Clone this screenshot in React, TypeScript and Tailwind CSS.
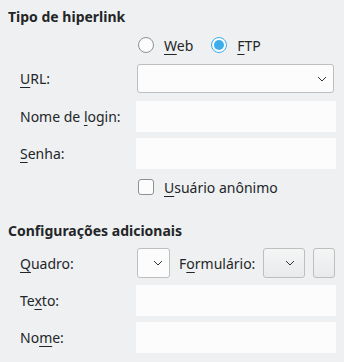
import React from "react";

const font = { fontFamily: '"Noto Sans", "Open Sans", sans-serif' };

function Chevron() {
  return (
    <svg width="10" height="6" viewBox="0 0 10 6" className="text-[#31363b]">
      <path d="M1 1 L5 5 L9 1" fill="none" stroke="currentColor" strokeWidth="1" />
    </svg>
  );
}

function Radio({ checked }: { checked?: boolean }) {
  return checked ? (
    <span className="flex h-4 w-4 items-center justify-center rounded-full border border-[#3daee9] bg-[#fcfcfc]">
      <span className="h-[10px] w-[10px] rounded-full bg-[#3daee9]" />
    </span>
  ) : (
    <span className="h-4 w-4 rounded-full border border-[#8e9092] bg-[#fcfcfc]" />
  );
}

function Label({ pre = "", u, post = "" }: { pre?: string; u: string; post?: string }) {
  return (
    <span>
      {pre}
      <span className="underline decoration-1 underline-offset-[3px]">{u}</span>
      {post}
    </span>
  );
}

function Row({ label, children }: { label: React.ReactNode; children: React.ReactNode }) {
  return (
    <div className="flex items-center">
      <div className="w-[128px] shrink-0 pl-3">{label}</div>
      <div className="flex-1">{children}</div>
    </div>
  );
}

function TextInput() {
  return <div className="h-[31px] w-full bg-[#fcfcfc]" />;
}

export default function App() {
  return (
    <div
      className="flex h-[362px] w-[344px] flex-col bg-[#eff0f1] px-2 text-[14px] text-[#232629]"
      style={font}
    >
      <div className="mt-[8px] h-[18px] text-[14px] font-bold leading-[18px]">Tipo de hiperlink</div>

      <div className="mt-[11px] ml-[130px] flex h-4 items-center">
        <Radio />
        <span className="ml-[10px] mr-[18px]">
          <Label u="W" post="eb" />
        </span>
        <Radio checked />
        <span className="ml-[10px]">
          <Label u="F" post="TP" />
        </span>
      </div>

      <div className="mt-[11px] flex flex-col">
        <Row label={<Label u="U" post="RL:" />}>
          <div className="ml-px mr-[2px] flex h-[29px] items-center justify-end rounded-[3px] border border-[#bcbebf] bg-[#fcfcfc] pr-[6px]">
            <Chevron />
          </div>
        </Row>
        <div className="mt-[8px]">
          <Row label={<Label pre="Nome de " u="l" post="ogin:" />}>
            <TextInput />
          </Row>
        </div>
        <div className="mt-[6px]">
          <Row label={<Label u="S" post="enha:" />}>
            <TextInput />
          </Row>
        </div>
      </div>

      <div className="mt-[10px] ml-[130px] flex h-4 items-center">
        <span className="h-4 w-4 rounded-[3px] border border-[#8e9092] bg-[#fcfcfc]" />
        <span className="ml-[10px]">
          <Label u="U" post="suário anônimo" />
        </span>
      </div>

      <div className="mt-[27px] h-[18px] text-[14px] font-bold leading-[18px]">Configurações adicionais</div>

      <div className="mt-[8px] flex flex-col">
        <Row label={<Label u="Q" post="uadro:" />}>
          <div className="flex items-center">
            <div className="ml-px flex h-[30px] w-[33px] shrink-0 items-center justify-end rounded-[3px] border border-[#bcbebf] bg-[#fcfcfc] pr-[6px]">
              <Chevron />
            </div>
            <span className="ml-[9px] w-[84px] shrink-0">
              <Label pre="F" u="o" post="rmulário:" />
            </span>
            <div className="flex h-[30px] w-[42px] shrink-0 items-center justify-end rounded-[3px] border border-[#bcbebf] bg-gradient-to-b from-[#f4f5f5] to-[#e9eaeb] pr-[9px]">
              <Chevron />
            </div>
            <div className="ml-[8px] h-[30px] w-[22px] shrink-0 rounded-[3px] border border-[#bcbebf] bg-gradient-to-b from-[#f4f5f5] to-[#e9eaeb]" />
          </div>
        </Row>
        <div className="mt-[7px]">
          <Row label={<Label pre="Te" u="x" post="to:" />}>
            <TextInput />
          </Row>
        </div>
        <div className="mt-[6px]">
          <Row label={<Label pre="No" u="m" post="e:" />}>
            <TextInput />
          </Row>
        </div>
      </div>
    </div>
  );
}
